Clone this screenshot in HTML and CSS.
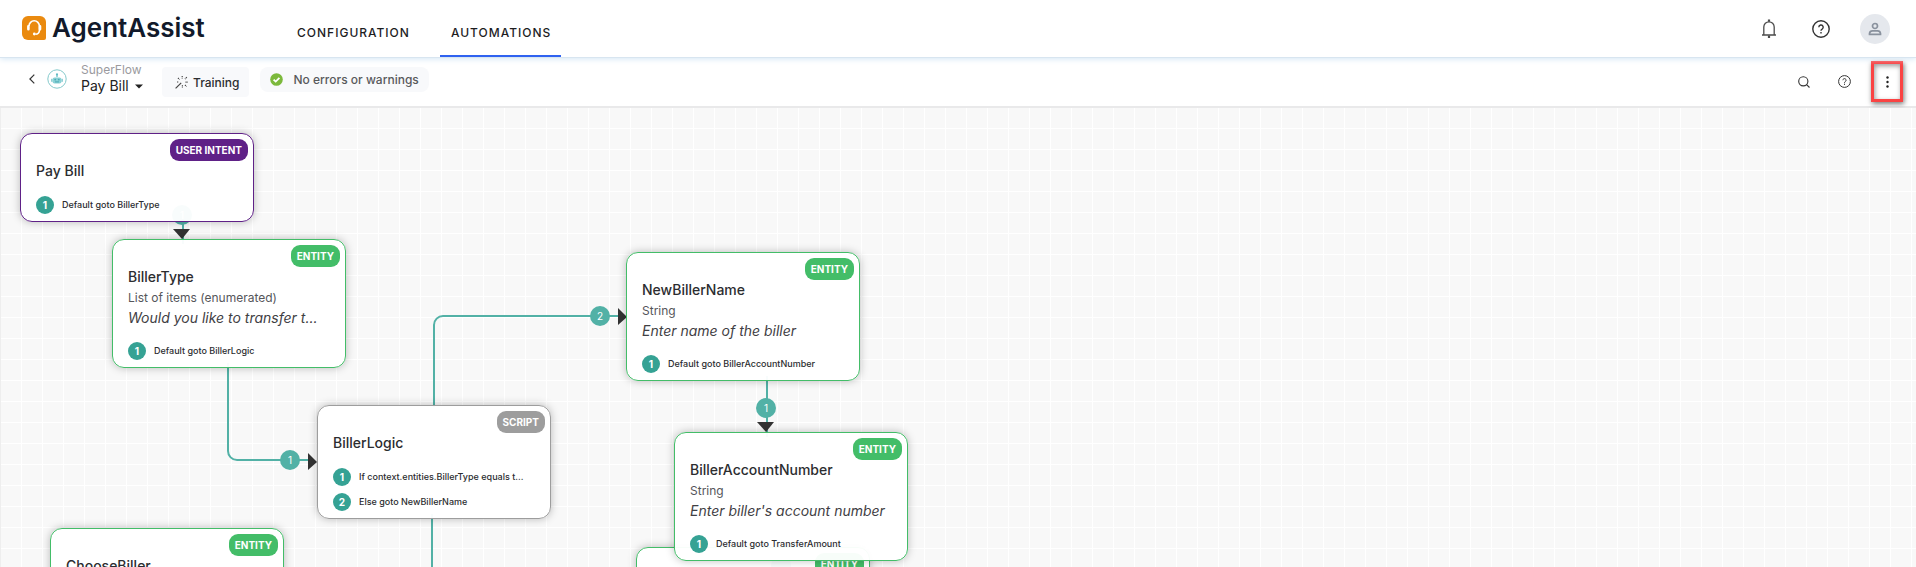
FILE: index.html
```html
<!DOCTYPE html>
<html lang="en">
<head>
<meta charset="utf-8">
<title>AgentAssist - Automations</title>
<link rel="stylesheet" href="styles.css">
</head>
<body>
<header class="topbar">
  <a class="brand" href="#">
    <svg class="brand-mark" width="24" height="24" viewBox="0 0 24 24" aria-hidden="true">
      <path d="M6 0h12a6 6 0 0 1 6 6v16a2 2 0 0 1-2 2H6a6 6 0 0 1-6-6V6a6 6 0 0 1 6-6z" fill="#ea8a0f"/>
      <path d="M7 10a5.200 5.200 0 0 1 10.400 0v4.500a4 4 0 0 1-4 3.700" fill="none" stroke="#fff" stroke-width="1.600"/>
      <path d="M6.400 10.300v3M18 10.300v3" stroke="#fff" stroke-width="2.600" stroke-linecap="round"/>
      <circle cx="12.300" cy="18" r="1.400" fill="#fff"/>
    </svg>
    <span>AgentAssist</span>
  </a>
  <nav class="tabs">
    <a class="tab" href="#">CONFIGURATION</a>
    <a class="tab tab-active" href="#" aria-current="page">AUTOMATIONS</a>
  </nav>
  <div class="top-actions">
    <button class="icon-button" aria-label="Notifications">
      <svg width="16" height="20" viewBox="0 0 16 20" fill="none" stroke="#4b4b4b" stroke-width="1.300">
        <path d="M1 16h14M2.800 16V8a5.200 5.200 0 0 1 10.400 0v8"/>
        <path d="M8 .5v2.300M8 16.500v2.500" stroke-width="2.200"/>
      </svg>
    </button>
    <button class="icon-button" aria-label="Help">
      <svg width="18" height="18" viewBox="0 0 18 18" fill="none" stroke="#333" stroke-width="1.400">
        <circle cx="9" cy="9" r="8.200"/>
        <path d="M6.800 7.200a2.200 2.200 0 1 1 3.300 1.900C9.300 9.500 9 9.900 9 10.800M9 12v1.500"/>
      </svg>
    </button>
    <button class="avatar" aria-label="Account">
      <svg width="14" height="14" viewBox="0 0 14 14" fill="none" stroke="#8a929e" stroke-width="1.700">
        <circle cx="7" cy="4" r="2.500"/>
        <path d="M1.500 12.300v-1A3 3 0 0 1 4.500 8.800h5a3 3 0 0 1 3 2.500v1z"/>
      </svg>
    </button>
  </div>
</header>

<section class="toolbar">
  <button class="back" aria-label="Back">
    <svg width="6" height="10" viewBox="0 0 6 10" fill="none" stroke="#333" stroke-width="1.200"><path d="M5.300.6.900 5l4.400 4.400"/></svg>
  </button>
  <svg class="bot" width="20" height="20" viewBox="0 0 20 20" aria-hidden="true">
    <circle cx="10" cy="10" r="9.200" fill="#fff" stroke="#83c9cb"/>
    <path d="M10 4.500V8" stroke="#62bcc4" stroke-width="1.200"/>
    <circle cx="10" cy="5.500" r="1.100" fill="#62bcc4"/>
    <rect x="5.500" y="8.500" width="9" height="6" rx="2" fill="#8ad2d6"/>
    <path d="M4.800 9.800v3M15.200 9.800v3" stroke="#62bcc4"/>
    <circle cx="8.200" cy="10.600" r=".9" fill="#4ba9b4"/><circle cx="11.800" cy="10.600" r=".9" fill="#4ba9b4"/>
    <path d="M8 12.900h4" stroke="#4ba9b4"/>
  </svg>
  <div class="flow-name">
    <span class="flow-kind">SuperFlow</span>
    <button class="flow-picker">Pay Bill
      <svg width="8" height="5" viewBox="0 0 8 5" aria-hidden="true"><path d="M0 .5h8L4 4.500z" fill="#222"/></svg>
    </button>
  </div>
  <button class="training">
    <svg width="13" height="13" viewBox="0 0 13 13" fill="none" stroke="#444" stroke-width="1.200" aria-hidden="true">
      <path d="M.6 12.400 6.200 6.800"/>
      <path d="M7.200 0v2.500M10.500 6.200H13M3 2l1.600 1.600M11.800 1.200 10 3M10 9l1.600 1.600M7.400 9.200v2.200M2 6h2" stroke-dasharray="1.200 .7"/>
    </svg>
    Training
  </button>
  <div class="status">
    <svg width="13" height="13" viewBox="0 0 13 13" aria-hidden="true"><circle cx="6.500" cy="6.500" r="6.300" fill="#7cb93c"/><path d="m3.600 6.600 2.100 2 3.700-3.700" fill="none" stroke="#fff" stroke-width="1.800"/></svg>
    No errors or warnings
  </div>
  <div class="tool-actions">
    <button class="icon-button" aria-label="Search">
      <svg width="12" height="12" viewBox="0 0 12 12" fill="none" stroke="#333" stroke-width="1.100"><circle cx="5.300" cy="5.300" r="4.600"/><path d="m8.600 8.600 2.900 2.900"/></svg>
    </button>
    <button class="icon-button" aria-label="Flow help">
      <svg width="13" height="13" viewBox="0 0 13 13" fill="none" stroke="#333"><circle cx="6.500" cy="6.500" r="5.900"/><path d="M4.900 5.200a1.600 1.600 0 1 1 2.400 1.400c-.6.300-.8.600-.8 1.200M6.500 8.700v1.200"/></svg>
    </button>
    <button class="more" aria-label="More options">
      <svg width="3" height="12" viewBox="0 0 3 12" fill="#222"><circle cx="1.500" cy="1.500" r="1.200"/><circle cx="1.500" cy="6" r="1.200"/><circle cx="1.500" cy="10.500" r="1.200"/></svg>
    </button>
  </div>
</section>

<main class="canvas">
  <svg class="wires" width="960" height="500" aria-hidden="true">
    <g class="wire-lines" transform="translate(-1 -108)">
      <path d="M183 215V244"/>
      <path d="M228 363V451a9 9 0 0 0 9 9H310"/>
      <path d="M434 407V325a9 9 0 0 1 9-9H620"/>
      <path d="M432 514V600"/>
      <path d="M767 376V437"/>
    </g>
    <g class="wire-arrows" transform="translate(-1 -108)">
      <path d="M173 229h17l-8 10z"/>
      <path d="M308 453v17l9-8z"/>
      <path d="M618 308v17l9-8z"/>
      <path d="M757 422h17l-8 10z"/>
    </g>
    <g class="wire-labels" transform="translate(-1 -108)">
      <circle cx="182" cy="215" r="10"/><text x="182" y="219">1</text>
      <circle cx="290" cy="460" r="10"/><text x="290" y="464">1</text>
      <circle cx="600" cy="316" r="10"/><text x="600" y="320">2</text>
      <circle cx="766" cy="408" r="10"/><text x="766" y="412">1</text>
      <circle cx="781" cy="565" r="10"/>
    </g>
  </svg>

  <article class="node intent at-pay-bill">
    <span class="badge">USER INTENT</span>
    <h2>Pay Bill</h2>
    <ol><li><b>1</b><span>Default goto BillerType</span></li></ol>
  </article>
  <article class="node entity at-biller-type">
    <span class="badge">ENTITY</span>
    <h2>BillerType</h2>
    <p class="kind">List of items (enumerated)</p>
    <p class="prompt">Would you like to transfer t...</p>
    <ol><li><b>1</b><span>Default goto BillerLogic</span></li></ol>
  </article>
  <article class="node entity at-new-biller">
    <span class="badge">ENTITY</span>
    <h2>NewBillerName</h2>
    <p class="kind">String</p>
    <p class="prompt">Enter name of the biller</p>
    <ol><li><b>1</b><span>Default goto BillerAccountNumber</span></li></ol>
  </article>
  <article class="node script at-biller-logic">
    <span class="badge">SCRIPT</span>
    <h2>BillerLogic</h2>
    <ol>
      <li><b>1</b><span>If context.entities.BillerType equals t...</span></li>
      <li><b>2</b><span>Else goto NewBillerName</span></li>
    </ol>
  </article>
  <article class="node entity at-amount">
    <span class="badge">ENTITY</span>
  </article>
  <article class="node entity at-account">
    <span class="badge">ENTITY</span>
    <h2>BillerAccountNumber</h2>
    <p class="kind">String</p>
    <p class="prompt">Enter biller's account number</p>
    <ol><li><b>1</b><span>Default goto TransferAmount</span></li></ol>
  </article>
  <article class="node entity at-choose">
    <span class="badge">ENTITY</span>
    <h2>ChooseBiller</h2>
  </article>
</main>
</body>
</html>
```
FILE: styles.css
```css
* { box-sizing: border-box; }

body {
  margin: 0;
  height: 100vh;
  display: flex;
  flex-direction: column;
  overflow: hidden;
  background: #fff;
  color: #2c2d30;
  font-family: Inter, "Liberation Sans", sans-serif;
  font-size: 12px;
}

a { color: inherit; text-decoration: none; }

button {
  display: flex;
  align-items: center;
  justify-content: center;
  padding: 0;
  border: 0;
  background: none;
  color: inherit;
  font: inherit;
}

svg { display: block; flex: none; }

/* Top bar */
.topbar {
  display: flex;
  flex: none;
  height: 58px;
  padding: 0 26px 0 22px;
  border-bottom: 1px solid #d8e5f0;
  box-shadow: 0 1px 6px #d3e6f5;
  z-index: 1;
}

.brand {
  display: flex;
  align-items: center;
  gap: 6px;
  width: 264px;
  padding-bottom: 2px;
  color: #121a2b;
  font-size: 26px;
  font-weight: 600;
}

.tabs { display: flex; gap: 20px; }

.tab {
  display: flex;
  align-items: center;
  padding: 10px 10px 0 11px;
  border-bottom: 2px solid transparent;
  color: #1d1d1f;
  font-size: 12px;
  font-weight: 500;
  letter-spacing: 1px;
}

.tab-active { border-color: #2f62f0; }

.top-actions {
  display: flex;
  align-items: center;
  gap: 26px;
  margin-left: auto;
}

.icon-button { width: 26px; height: 26px; }

.avatar {
  width: 30px;
  height: 30px;
  border-radius: 50%;
  background: #e5e8ed;
}

/* Flow toolbar */
.toolbar {
  display: flex;
  align-items: flex-start;
  flex: none;
  height: 50px;
  padding: 3px 13px 0 28px;
  border-bottom: 2px solid #e9e9ea;
}

.back { width: 8px; height: 36px; }

.bot { margin: 8px 14px 0 11px; }

.flow-name { width: 81px; padding-top: 1px; }

.flow-kind { display: block; line-height: 16px; color: #9a9a9e; }

.flow-picker { gap: 6px; font-size: 14px; line-height: 16px; color: #222; }

.training {
  gap: 5px;
  height: 30px;
  margin-top: 6px;
  padding: 0 10px 0 13px;
  border-radius: 4px;
  background: #f8f9fb;
  font-weight: 500;
}

.status {
  display: flex;
  align-items: center;
  gap: 10px;
  height: 25px;
  margin: 6px 0 0 11px;
  padding: 0 10px;
  border-radius: 8px;
  background: #f8f9fb;
  color: #58595b;
  font-weight: 500;
}

.tool-actions {
  display: flex;
  align-items: center;
  gap: 14px;
  margin-left: auto;
}

.more {
  width: 32px;
  height: 41px;
  border: 3px solid #fa4343;
  box-shadow: 1px 2px 5px #777, inset 1px 2px 5px #999;
}

/* Canvas */
.canvas {
  position: relative;
  flex: 1;
  overflow: hidden;
  border-left: 1px solid #eee;
  background-color: #f8f8f8;
  background-image:
    linear-gradient(to right, transparent 20px, #fff 20px),
    linear-gradient(to bottom, transparent 20px, #fff 20px);
  background-size: 21px 21px;
}

.wires { position: absolute; left: 0; top: 0; }
.wire-lines { fill: none; stroke: #52b1a6; stroke-width: 2; }
.wire-arrows { fill: #333; }
.wire-labels { fill: #52b1a6; font-size: 10px; text-anchor: middle; }
.wire-labels text { fill: #fff; }

.node {
  position: absolute;
  width: 234px;
  padding: 27px 15px 7px;
  border: 1px solid var(--tone);
  border-radius: 12px;
  background: rgba(255, 255, 255, .96);
  box-shadow: 0 0 8px rgba(0, 0, 0, .25);
}

.intent { --tone: #5f2187; }
.entity { --tone: #43bd68; }
.script { --tone: #9d9d9d; }

.at-pay-bill { left: 19px; top: 25px; }
.at-biller-type { left: 111px; top: 131px; }
.at-new-biller { left: 625px; top: 144px; }
.at-biller-logic { left: 316px; top: 297px; }
.at-account { left: 673px; top: 324px; }
.at-amount { left: 635px; top: 439px; height: 129px; }
.at-choose { left: 49px; top: 420px; height: 129px; }

.badge {
  position: absolute;
  top: 5px;
  right: 5px;
  padding: 0 6px;
  border-radius: 9px;
  background: var(--tone);
  color: #fff;
  font-size: 10px;
  font-weight: 700;
  line-height: 22px;
}

.node h2 {
  margin: 0;
  font-size: 14px;
  font-weight: 500;
  line-height: 20px;
}

.node p { margin: 0; white-space: nowrap; }
.node .kind { font-size: 12px; line-height: 22px; color: #55565a; }
.node .prompt { font-size: 14px; line-height: 18px; font-style: italic; color: #3f4044; }

.node ol {
  display: grid;
  gap: 7px;
  margin: 15px 0 0;
  padding: 0;
  list-style: none;
}

.node li {
  display: flex;
  align-items: center;
  gap: 8px;
  font-size: 9px;
  font-weight: 500;
  line-height: 16px;
  white-space: nowrap;
}

.node li b {
  width: 18px;
  border-radius: 50%;
  background: #35a294;
  color: #fff;
  font-size: 10px;
  line-height: 18px;
  text-align: center;
}
```
